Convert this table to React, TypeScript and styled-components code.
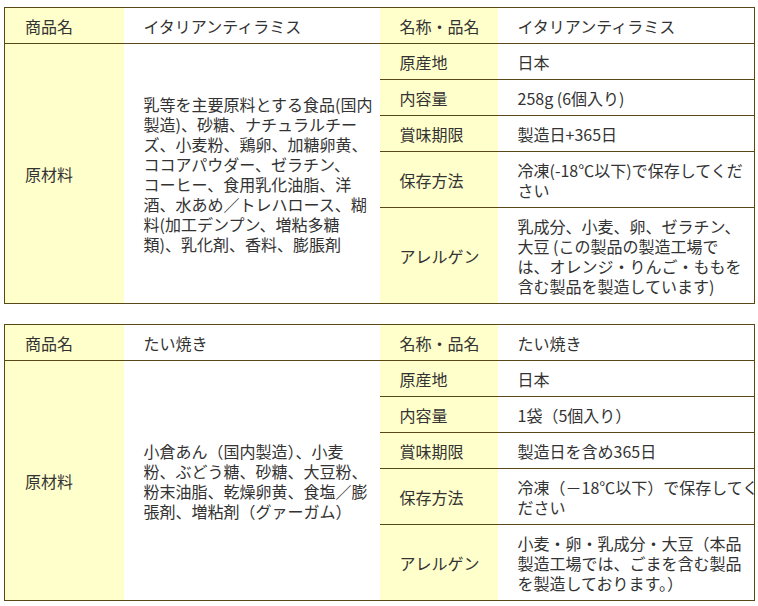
import React, { FC } from "react";
import styled, { createGlobalStyle } from "styled-components";

const GlobalStyle = createGlobalStyle`
  html, body {
    margin: 0;
    padding: 0;
    background: #ffffff;
  }
  body {
    font-family: "Noto Sans CJK JP", "Noto Sans", sans-serif;
    color: #333333;
  }
`;

const Page = styled.div`
  padding: 7px 0 0 4px;
  display: flex;
  flex-direction: column;
  gap: 20px;
`;

const Table = styled.table`
  width: 750px;
  border-collapse: collapse;
  table-layout: fixed;
  border: 1px solid #5a4816;
  font-size: 16px;
  line-height: 20px;
`;

const Cell = styled.td<{ $label?: boolean }>`
  padding: 7.5px 0 7.5px 20px;
  border-bottom: 1px solid #5a4816;
  background: ${(p) => (p.$label ? "#ffffcc" : "#ffffff")};
  vertical-align: middle;
  text-align: left;
  color: #333333;
  font-weight: 400;
  white-space: nowrap;
`;

const Line = styled.span`
  display: block;
  white-space: nowrap;
`;

interface Product {
  name: string;
  ingredients: string[];
  origin: string;
  amount: string;
  expiry: string;
  storage: string[];
  allergens: string[];
}

const products: Product[] = [
  {
    name: "イタリアンティラミス",
    ingredients: [
      "乳等を主要原料とする食品(国内",
      "製造)、砂糖、ナチュラルチー",
      "ズ、小麦粉、鶏卵、加糖卵黄、",
      "ココアパウダー、ゼラチン、",
      "コーヒー、食用乳化油脂、洋",
      "酒、水あめ／トレハロース、糊",
      "料(加工デンプン、増粘多糖",
      "類)、乳化剤、香料、膨脹剤",
    ],
    origin: "日本",
    amount: "258g (6個入り)",
    expiry: "製造日+365日",
    storage: ["冷凍(-18℃以下)で保存してくだ", "さい"],
    allergens: [
      "乳成分、小麦、卵、ゼラチン、",
      "大豆 (この製品の製造工場で",
      "は、オレンジ・りんご・ももを",
      "含む製品を製造しています)",
    ],
  },
  {
    name: "たい焼き",
    ingredients: [
      "小倉あん（国内製造）、小麦",
      "粉、ぶどう糖、砂糖、大豆粉、",
      "粉末油脂、乾燥卵黄、食塩／膨",
      "張剤、増粘剤（グァーガム）",
    ],
    origin: "日本",
    amount: "1袋（5個入り）",
    expiry: "製造日を含め365日",
    storage: ["冷凍（－18℃以下）で保存してく", "ださい"],
    allergens: [
      "小麦・卵・乳成分・大豆（本品",
      "製造工場では、ごまを含む製品",
      "を製造しております。）",
    ],
  },
];

const Lines: FC<{ lines: string[] }> = ({ lines }) => (
  <>
    {lines.map((line, i) => (
      <Line key={i}>{line}</Line>
    ))}
  </>
);

const ProductTable: FC<{ product: Product }> = ({ product }) => (
  <Table>
    <colgroup>
      <col style={{ width: 119 }} />
      <col style={{ width: 256 }} />
      <col style={{ width: 118 }} />
      <col style={{ width: 257 }} />
    </colgroup>
    <tbody>
      <tr>
        <Cell as="th" $label>商品名</Cell>
        <Cell>{product.name}</Cell>
        <Cell as="th" $label>名称・品名</Cell>
        <Cell>{product.name}</Cell>
      </tr>
      <tr>
        <Cell as="th" $label rowSpan={5}>原材料</Cell>
        <Cell rowSpan={5}>
          <Lines lines={product.ingredients} />
        </Cell>
        <Cell as="th" $label>原産地</Cell>
        <Cell>{product.origin}</Cell>
      </tr>
      <tr>
        <Cell as="th" $label>内容量</Cell>
        <Cell>{product.amount}</Cell>
      </tr>
      <tr>
        <Cell as="th" $label>賞味期限</Cell>
        <Cell>{product.expiry}</Cell>
      </tr>
      <tr>
        <Cell as="th" $label>保存方法</Cell>
        <Cell>
          <Lines lines={product.storage} />
        </Cell>
      </tr>
      <tr>
        <Cell as="th" $label>アレルゲン</Cell>
        <Cell>
          <Lines lines={product.allergens} />
        </Cell>
      </tr>
    </tbody>
  </Table>
);

const App: FC = () => (
  <>
    <GlobalStyle />
    <Page>
      {products.map((p) => (
        <ProductTable key={p.name} product={p} />
      ))}
    </Page>
  </>
);

export default App;
